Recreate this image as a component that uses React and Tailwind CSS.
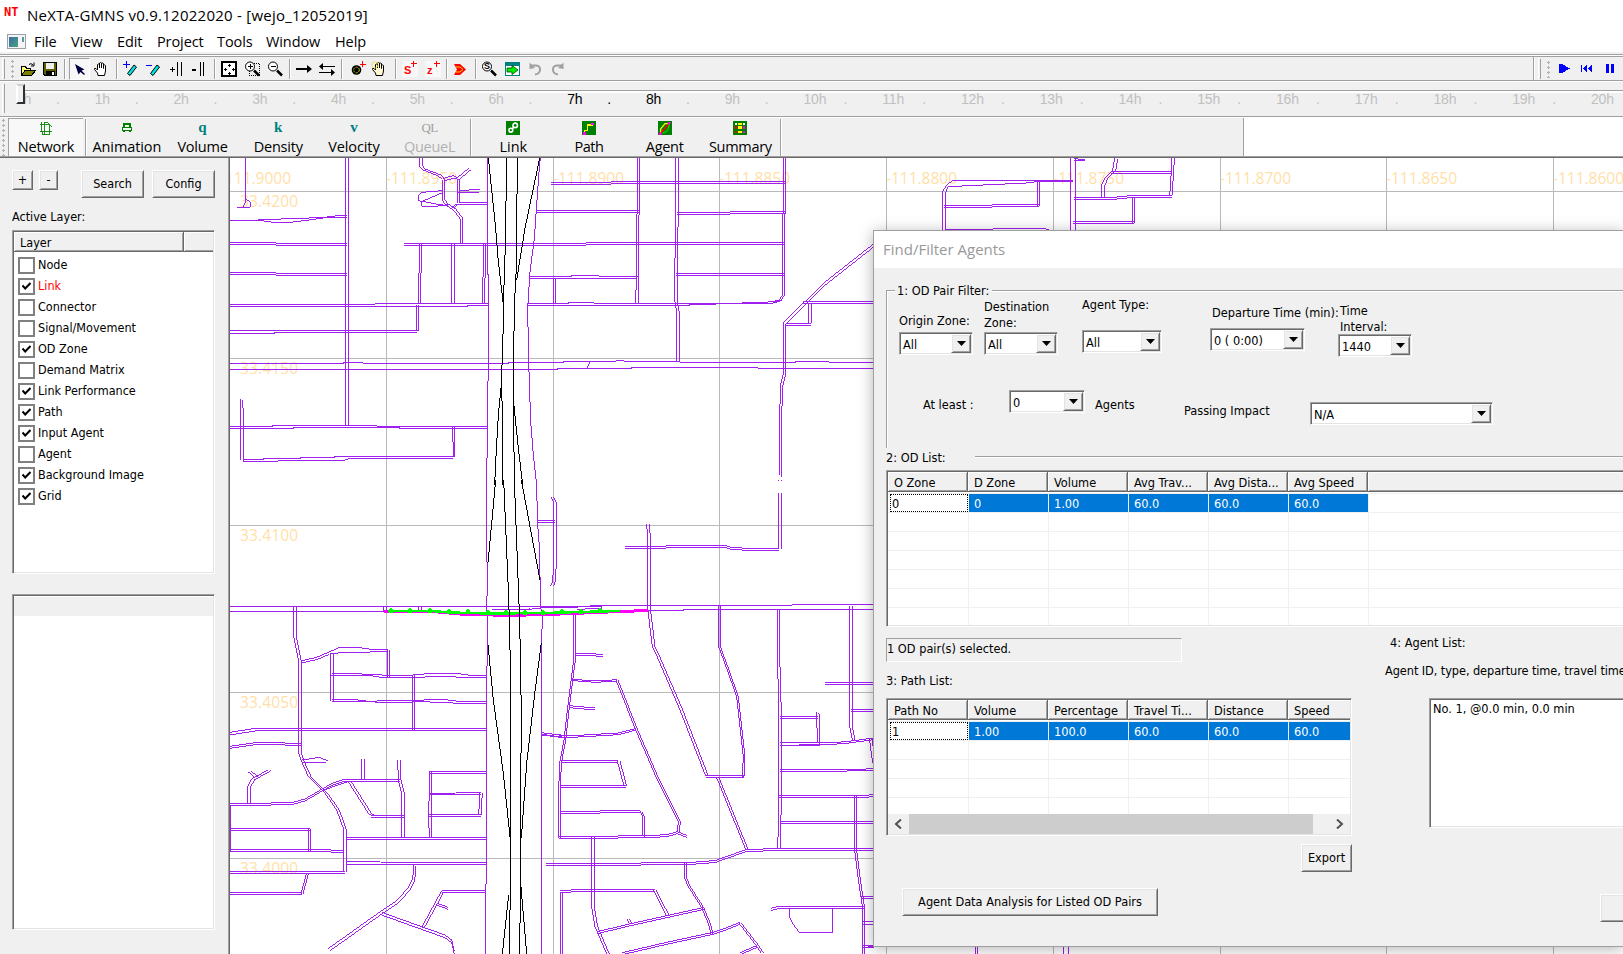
import React from 'react';

const TAHOMA = "font-['DejaVu_Sans_Condensed','DejaVu_Sans',sans-serif] [font-stretch:condensed]";
const SEGOE = "font-['Open_Sans',sans-serif] [font-stretch:normal]";
const RAISED =
  'bg-[#f0f0f0] border border-t-white border-l-white border-r-[#696969] border-b-[#696969] shadow-[inset_1px_1px_0_#e3e3e3,inset_-1px_-1px_0_#a0a0a0]';
const SUNKEN =
  'bg-white border border-t-[#a0a0a0] border-l-[#a0a0a0] border-r-white border-b-white p-px shadow-[inset_1px_1px_0_#696969,inset_-1px_-1px_0_#e3e3e3]';

/* ---------- road network: [offset of the twin carriageway, points] ---------- */
const NW = [
  ['0 0', '61,9 61,140 55,157'], ['0 0', '61,132 76,140 76,157 37,157'],
  ['9 0', '362,9 362,810'],
  ['0 0', '15,196 105,196 145,202 195,202 260,194 300,188 365,187'],
  ['0 0', '98,194 207,191 300,187 345,181 365,182'],
  ['0 6', '15,263 153,263 153,265 365,265'],
  ['0 6', '15,352 153,352 153,355 365,355'],
  ['0 0', '15,448 450,448 450,446 790,446'], ['0 0', '15,454 728,454 728,451 790,451'],
  ['0 0', '15,526 580,526'], ['0 0', '15,535 150,535 150,532 576,532'],
  ['7 0', '575,450 574,528'],
  ['0 0', '15,625 357,625 357,622 413,622 413,625 852,625 852,622 1015,622'],
  ['0 0', '15,643 1000,643 1000,640 1020,640'],
  ['0 0', '47,732 47,915'], ['0 0', '53,735 55,780 55,918'],
  ['0 0', '15,814 144,814 144,811 456,811 456,814 788,814'],
  ['0 0', '15,820 207,820 207,817 525,817 525,821 788,821'],
  ['0 0', '53,919 158,919 160,916 368,915 368,912 578,912 580,910 685,910'],
  ['0 0', '55,913 117,913 117,910 228,910 228,907 330,907 330,904 685,904'],
  ['5 0', '683,817 685,905'],
  ['0 0', '788,9 788,360 791,360 791,675 788,680 788,905 785,910 785,990'],
  ['0 0', '945,9 937,120 928,250 915,350 908,460 911,620 917,800 925,900 935,990'],
  ['7 -3', '585,9 585,35 594,45 640,63 652,74 652,135 660,148 685,165 706,192 706,266'],
  ['4 7', '655,70 685,62 697,68 733,38'], ['6 0', '697,72 697,145 680,160'],
  ['0 0', '652,107 590,112 580,122 580,137 645,149 668,152'],
  ['0 0', '652,113 590,140 590,154 632,154 668,149'],
  ['0 0', '705,107 733,106 735,103 764,103'], ['0 0', '700,112 762,112'],
  ['0 6', '702,142 788,142'], ['0 6', '538,265 1020,265'],
  ['6 0', '584,268 584,340 581,360 581,445'], ['8 0', '680,268 680,446'],
  ['7 0', '776,268 776,355 773,370 773,445'],
  ['0 6', '978,83 1020,83'], ['0 6', '935,166 1020,166'], ['0 6', '915,364 1020,364'],
  ['6 0', '986,370 986,448'], ['0 6', '908,446 1020,446'],
];
const N = [
  ['0 0', '0,9 0,18'], ['7 0', '293,9 293,170 290,180 290,330 287,446'],
  ['7 0', '408,9 408,170 405,310 405,440 411,475 411,620'],
  ['6 0', '732,9 732,120 728,195 728,420 716,437 700,443'],
  ['0 6', '34,83 165,83 240,80 735,80'], ['0 6', '0,167 297,167'],
  ['0 6', '410,173 570,173 570,170 735,170'],
  ['0 6', '0,265 135,265 147,262 735,262'], ['0 6', '408,355 732,355'],
  ['0 0', '0,364 96,364 96,361 177,361 177,364 293,364'], ['0 0', '0,370 290,370'],
  ['6 0', '41,370 41,448'],
  ['0 0', '0,445 87,445 87,442 162,442 162,445 605,445 607,442 684,442 685,439 727,437'],
  ['0 0', '0,451 450,451 450,448 527,448 527,445 700,445'],
  ['0 0', '0,622 72,622 72,619 228,619 228,617 252,617 252,619 420,619 420,622 768,622 768,619 867,619 867,622 1001,622'],
  ['0 0', '0,643 54,643 54,640 276,640 276,637 654,637 654,640 1001,640'],
  ['0 0', '149,620 142,640'],
  ['6 5', '1000,267 850,385 732,502 732,650 723,685 719,770 719,960'],
  ['0 6', '790,439 1001,439'], ['8 0', '806,445 806,505'], ['0 5', '737,506 812,506'],
];
const SW = [
  ['0 0', '15,380 945,380'], ['0 0', '15,394 480,394'],
  ['9 0', '476,380 476,392'], ['8 0', '581,380 581,392'],
  ['0 0', '785,0 785,245 788,250 785,400 788,410 788,500 785,590 785,1210 782,1215 782,1422'],
  ['0 0', '935,0 937,120 943,200 947,380 952,410 949,520 949,1422'],
  ['0 0', '800,388 900,390 945,384 1020,384'], ['0 0', '800,390 915,387'],
  ['8 0', '207,380 207,475 221,545 221,820 232,850 250,890 300,940 335,990 355,1045 357,1175'],
  ['3 6', '228,543 275,532 310,517'],
  ['0 0', '310,517 345,502 400,502 430,507 490,509'], ['0 0', '315,520 385,517 490,515'],
  ['8 0', '317,520 317,662'], ['6 0', '488,509 488,590'],
  ['0 0', '318,586 430,586 470,592 590,592 625,589 675,589 700,592 783,592'],
  ['0 0', '322,580 400,581 435,584 460,583 490,588 550,586 590,583 605,581 700,581 735,586 783,587'],
  ['7 0', '563,586 563,750'],
  ['0 0', '322,658 390,659 430,664 510,661 590,661 605,659 660,659 700,664 783,664'],
  ['0 0', '322,664 440,664 445,666 540,667 590,665 640,667 680,669 783,670'],
  ['0 8', '15,757 90,745 783,745'],
  ['0 6', '15,799 90,788 170,788 200,791 228,791'],
  ['0 0', '231,840 285,832 308,843'], ['0 0', '231,847 302,847'],
  ['0 6', '15,970 138,970 140,967 205,967 240,957 290,928 325,908 355,899 525,899'],
  ['0 0', '290,932 370,905'],
  ['8 3', '68,970 68,920 80,897 130,869'], ['8 -3', '70,876 90,893'],
  ['7 0', '411,837 411,899'], ['8 0', '518,840 520,900 530,940 530,1075'],
  ['9 0', '368,902 430,1000 440,1007'], ['0 6', '437,1007 537,1007'],
  ['0 6', '613,875 783,875'], ['7 0', '614,877 611,1010 613,1075'],
  ['0 5', '614,940 690,940 692,938 768,938'], ['7 0', '765,938 761,1005'], ['0 6', '613,1003 768,1003'],
  ['0 6', '362,1073 783,1073'],
  ['0 6', '15,1046 254,1046'], ['6 0', '250,1046 250,1112'],
  ['0 6', '15,1108 305,1108 325,1111 358,1111'], ['0 0', '17,975 17,1112'],
  ['0 6', '15,1174 360,1174'], ['0 6', '15,1238 232,1238'], ['6 0', '245,1178 228,1242'],
  ['0 0', '362,1145 465,1145 467,1147 783,1147'], ['0 0', '362,1153 783,1153'],
  ['6 6', '567,1152 563,1195 548,1225 515,1262 470,1292 308,1407'],
  ['0 8', '470,1297 595,1342 660,1365 680,1380 688,1414'],
  ['7 3', '590,1342 650,1232'], ['0 6', '650,1232 783,1232'], ['0 6', '637,1270 670,1282'],
  ['0 7', '949,758 1015,766'], ['8 0', '978,52 986,67 986,250 983,305 977,318'],
  ['0 6', '937,121 990,121'],
  ['0 6', '963,1150 1020,1150'], ['7 0', '1007,1235 1007,1422'], ['0 6', '1006,1232 1020,1232'],
];
const S = [
  ['8 0', '320,132 323,172 323,385 337,500 347,520 420,690 497,888'],
  ['0 6', '254,199 378,199 380,196 553,196 575,202 620,205 718,205'],
  ['8 0', '716,40 716,208'], ['8 0', '716,0 716,4'],
  ['0 0', '0,380 150,380 150,377 756,377 756,374 1001,374'],
  ['0 0', '324,391 432,391 432,388 1001,388'],
  ['0 0', '0,384 95,384 115,381 185,379 185,385 110,388'],
  ['5 0', '101,400 101,540 92,610 82,690 72,780 59,850 56,930 56,1073'],
  ['0 6', '105,520 145,520 190,524'], ['0 4', '100,598 165,603 218,600 230,599'],
  ['6 0', '228,600 285,745 350,895 415,1025 412,1055'],
  ['0 6', '87,677 165,684'],
  ['0 5', '5,758 80,768 150,764 235,759 285,746'],
  ['0 6', '64,841 235,841'], ['8 0', '232,843 252,918'], ['0 6', '60,916 258,916'],
  ['0 6', '62,995 180,995 180,992 300,992'], ['7 4', '299,992 308,1010 308,1068'],
  ['0 6', '58,1070 232,1070 234,1067 320,1067 380,1064 412,1055 440,1066'],
  ['8 0', '155,1072 155,1280 165,1340 200,1422'],
  ['0 6', '18,1150 297,1150 315,1147 448,1147 490,1145 530,1140 620,1108 670,1107 1001,1106'],
  ['5 0', '536,377 536,500 560,565 590,650 600,740 610,830 607,890'],
  ['0 6', '497,888 613,888'], ['7 0', '530,893 617,1108'],
  ['7 0', '713,390 713,560 717,700 717,970 713,1108'],
  ['8 0', '929,379 929,605 929,740 937,780'], ['0 6', '856,607 1001,607'], ['0 6', '933,688 1001,688'],
  ['0 6', '720,710 833,710'], ['7 3', '830,697 832,788'],
  ['0 8', '720,788 840,788'], ['0 5', '777,789 860,789 920,785 1001,774'],
  ['8 0', '988,775 998,850'],
  ['0 5', '720,869 862,869 980,867 1001,866'], ['0 6', '718,946 980,946 1001,943'], ['0 6', '720,1024 1001,1024'],
  ['6 0', '944,948 944,1110 955,1200 968,1285 968,1422'],
  ['0 6', '962,1250 1001,1250'], ['0 7', '970,1326 1001,1326'], ['0 6', '970,1397 1001,1397'],
  ['0 7', '694,1285 710,1280 972,1280'], ['0 0', '740,1281 885,1281'],
  ['0 0', '748,1285 748,1310 760,1333 778,1357 878,1357 878,1285'],
  ['6 0', '62,1235 62,1422'], ['0 6', '62,1232 110,1229 345,1229'], ['8 0', '340,1230 380,1308'],
  ['6 0', '434,1150 434,1195 445,1220 485,1283 505,1330 513,1362'],
  ['0 6', '172,1355 272,1331 385,1306 492,1282'], ['8 0', '260,1316 268,1332'],
  ['0 6', '247,1418 380,1387 515,1358 560,1343 600,1327'], ['7 0', '597,1330 650,1398 664,1420'],
  ['0 6', '600,1418 650,1397'],
];
const NE = [
  ['0 0', '228,228 228,110 235,95 340,90 470,84 500,80 610,80'],
  ['0 0', '218,228 218,110 230,90 247,77 610,77'],
  ['7 0', '503,80 503,153'], ['0 6', '223,152 365,152 366,149 508,149'],
  ['0 0', '228,223 368,223 370,221 525,221 545,227'],
  ['16 0', '602,9 602,130 602,228'], ['0 4', '612,11 645,14'],
  ['9 2', '734,9 728,45 705,68 695,90 695,128'],
  ['0 6', '722,49 905,49'], ['7 0', '906,9 904,50 899,122'],
  ['0 6', '612,128 722,128 780,122 905,122'], ['6 0', '788,125 788,203'], ['0 6', '610,199 793,199'],
  ['0 6', '0,439 12,439'], ['0 18', '0,622 12,622'],
];
const BLACK_N = [
  '790,9 812,220 820,320 835,450', '845,9 841,270 835,450 834,540 829,690 832,760 834,990',
  '829,690 820,780 812,920 809,990', '877,9 874,340 868,450 865,690 868,990',
  '944,9 900,220 875,375', '865,735 880,880 893,990',
];
const BLACK_S = [
  '812,0 800,130 789,248', '836,0 850,330 853,420 858,640 857,1160 853,1422',
  '868,0 880,320 884,420 889,700 886,1060 887,1240 883,1422', '889,0 930,220 945,300',
  '789,495 805,660 835,880 855,1070', '949,488 928,650 905,850 889,1075',
  '851,1245 832,1422', '888,1220 905,1422',
];

function Roads({ data, at }) {
  return (
    <g transform={`translate(${at}) scale(0.333333)`} stroke="#a020f0" strokeWidth="3" fill="none">
      {data.map(([off, pts], i) => (
        <g key={i}>
          <polyline points={pts} />
          {off !== '0 0' && <polyline points={pts} transform={`translate(${off})`} />}
        </g>
      ))}
    </g>
  );
}

function NetworkMap() {
  const xs = [386, 553, 719, 886, 1053, 1220, 1386, 1553];
  const ys = [191, 358, 525, 692, 858];
  const lon = ['-111.9000', '-111.8950', '-111.8900', '-111.8850', '-111.8800', '-111.8750', '-111.8700', '-111.8650', '-111.8600'];
  const lonX = [220, 386, 553, 719, 886, 1053, 1220, 1386, 1553];
  const lat = [['33.4200', 207], ['33.4150', 374], ['33.4100', 541], ['33.4050', 708], ['33.4000', 874]];
  const nodes = [[391, 610], [410, 610], [430, 610], [449, 611], [468, 611], [488, 612], [506, 612], [525, 612], [543, 612], [562, 611], [581, 611], [600, 610]];
  return (
    <svg className="block h-[796px] w-[1393px] bg-white" viewBox="230 158 1393 796" shapeRendering="crispEdges">
      <g stroke="#b9b9b9" strokeWidth="1">
        {xs.map((x) => <line key={x} x1={x + 0.5} x2={x + 0.5} y1="158" y2="954" />)}
        {ys.map((y) => <line key={y} y1={y + 0.5} y2={y + 0.5} x1="230" x2="1623" />)}
      </g>
      <g className={`${SEGOE} text-[15.5px]`} fill="#ffdfa8">
        {lon.map((t, i) => <text key={t} x={lonX[i]} y="184" textLength="71">{t}</text>)}
        {lat.map(([t, y]) => <text key={t} x="240" y={y} textLength="58">{t}</text>)}
      </g>
      <Roads data={NW} at="225 155" />
      <Roads data={N} at="540 155" />
      <Roads data={SW} at="225 480" />
      <Roads data={S} at="540 480" />
      <Roads data={NE} at="870 155" />
      <g stroke="#a020f0" fill="none">
        <path d="M975.500 946V954M977.500 946V954M1063.500 946V954M1068.500 946V954M868 946.500H906" />
      </g>
      <polyline points="384,611.500 433,611.500 460,614 510,615.500 560,614 620,611.500 648,610.500" stroke="#ff00ff" strokeWidth="3" fill="none" />
      <polyline points="388,611 432,611 450,612.500 490,613.500 545,613 580,612 620,611" stroke="#00ff00" strokeWidth="2.500" fill="none" />
      {nodes.map(([x, y]) => <path key={x} d={`M${x - 2} ${y - 1}H${x - 1}V${y - 2}H${x + 1}V${y - 1}H${x + 2}V${y + 3}H${x - 2}Z`} fill="#00ff00" />)}
      <g stroke="#000" strokeWidth="3" fill="none">
        <g transform="translate(225 155) scale(0.333333)">{BLACK_N.map((p) => <polyline key={p} points={p} />)}</g>
        <g transform="translate(225 480) scale(0.333333)">{BLACK_S.map((p) => <polyline key={p} points={p} />)}</g>
      </g>
    </svg>
  );
}

/* ---------- toolbar icons ---------- */
const I = ({ children, c = '' }) => (
  <svg className={`h-4 w-4 shrink-0 ${c}`} viewBox="0 0 16 16" fill="none" stroke="#000" shapeRendering="crispEdges">{children}</svg>
);
const Mag = () => (
  <>
    <circle cx="6" cy="5.500" r="4.500" fill="#fff" shapeRendering="auto" />
    <path d="M10 9.500L15 14.500" strokeWidth="2.500" shapeRendering="auto" />
  </>
);
const HandShape = ({ fill = '#fff' }) => (
  <path d="M5 14.500L4.500 12L1.500 8.500V7.500H3L4.500 9V3.500Q5.500 2.500 6.500 3.500V7V2Q7.500 1 8.500 2V7V2.500Q9.500 1.500 10.500 2.500V7.500V4Q11.500 3.500 12.500 4.500V10L11.500 14.500Z" fill={fill} shapeRendering="auto" />
);
const Sep = ({ c }) => <div className={`h-[20px] w-0.5 border-l border-l-[#a0a0a0] bg-white ${c}`} />;
const Red = ({ t, c }) => (
  <div className={`relative h-4 w-4 shrink-0 bg-[#f8f8f8] ${c}`}>
    <span className="absolute left-[2px] top-[3px] font-['Liberation_Sans',sans-serif] text-[11px] leading-[13px] font-bold text-[#f00]">{t}</span>
    <svg className="absolute left-[8px] top-0 h-[7px] w-[7px]" viewBox="0 0 7 7" stroke="#f00" shapeRendering="crispEdges"><path d="M3.500 0V6M0.500 2.500H6.500" /></svg>
  </div>
);

function Grip({ c = '' }) {
  return <div className={`w-[3px] border-l border-r border-l-white border-r-[#a0a0a0] ${c}`} />;
}
function Dots({ c = '' }) {
  return <div className={`w-[3px] bg-[radial-gradient(circle,#b0b0b0_1.2px,transparent_1.4px)] bg-[length:3px_5px] ${c}`} />;
}

function MainToolbar() {
  return (
    <div className="flex h-[23px] items-center bg-[#f0f0f0]">
      <Grip c="ml-[2px] h-[20px]" />
      <Dots c="ml-[6px] h-[20px]" />
      <I c="ml-[6px]">
        <path d="M1.500 14V5.500H5L6.500 7H10.500V9" fill="#ffff80" />
        <path d="M1.500 14.500L5 9.500H15.500L11.500 14.500Z" fill="#808000" />
        <path d="M9 3.500Q11 1.500 13 4M14 1.500V5H11" shapeRendering="auto" />
      </I>
      <I c="ml-[6px]">
        <path d="M1.500 1.500H14.500V14.500H3L1.500 13Z" fill="#606000" /><rect x="4" y="2" width="8" height="6" fill="#f0f0f0" stroke="none" /><rect x="4" y="10" width="9" height="5" fill="#000" stroke="none" /><rect x="10" y="11" width="2" height="3" fill="#fff" stroke="none" />
      </I>
      <Sep c="ml-[6px]" />
      <div className="ml-[3px] flex h-[22px] w-[21px] items-center justify-center border border-b-white border-l-[#a0a0a0] border-r-white border-t-[#a0a0a0] bg-[#f8f8f8]">
        <I><path d="M3 3L12.500 8.500L9.500 9.500L13 13L12 14L8.500 11L6.500 13.500Z" fill="#000040" stroke="none" shapeRendering="auto" /></I>
      </div>
      <I c="ml-[3px]"><HandShape /></I>
      <Sep c="ml-[7px]" />
      <I c="ml-[4px]"><path d="M1 3.500H8M4.500 0V7" stroke="#00f" /><path d="M12 4L14.500 6L8 14.500L5.500 12.500Z" fill="#00e5e5" shapeRendering="auto" /></I>
      <I c="ml-[7px]"><path d="M1 4.500H7" stroke="#00f" /><path d="M12 4L14.500 6L8 14.500L5.500 12.500Z" fill="#00e5e5" shapeRendering="auto" /></I>
      <I c="ml-[7px]"><path d="M2 8.500H7M4.500 6V11" strokeWidth="1.400" /><path d="M9.500 1V15M13.500 1V15" /></I>
      <I c="ml-[6px]"><path d="M2 9H6" strokeWidth="1.500" /><path d="M10.500 1V15M13.500 1V15" /></I>
      <Sep c="ml-[8px]" />
      <I c="ml-[5px]"><rect x="1" y="1" width="14" height="14" strokeWidth="2" fill="#fff" /><path d="M7 4.500H10M8.500 3V6M7 12.500H10M8.500 11V14M3 8.500H6M4.500 7V10M11 8.500H14M12.500 7V10" /></I>
      <I c="ml-[7px]"><rect x="5.500" y="2.500" width="10" height="12" strokeDasharray="1 1" /><Mag /><path d="M3.500 5.500H8.500M6 3V8" /></I>
      <I c="ml-[7px]"><Mag /><path d="M3.500 5.500H8.500" /></I>
      <Sep c="ml-[6px]" />
      <I c="ml-[5px]"><path d="M0 8H15" strokeWidth="2" /><path d="M11 4L16 8L11 12Z" fill="#000" stroke="none" shapeRendering="auto" /></I>
      <I c="ml-[7px]"><path d="M1 5.500H16M0 11.500H15" /><path d="M4 2L0 5.500L4 9ZM12 8L16 11.500L12 15Z" fill="#000" stroke="none" shapeRendering="auto" /></I>
      <Sep c="ml-[6px]" />
      <I c="ml-[7px]"><circle cx="6.500" cy="9" r="4.800" fill="#000" stroke="none" shapeRendering="auto" /><circle cx="6.500" cy="9" r="2.800" stroke="#c8c800" strokeDasharray="2 1" shapeRendering="auto" /><path d="M12.500 0V6M10 3.500H16" stroke="#f00" /></I>
      <I c="ml-[5px]"><HandShape fill="#fff8d0" /><circle cx="4" cy="4" r="3" stroke="#f0e000" strokeDasharray="2 1" shapeRendering="auto" /></I>
      <Sep c="ml-[8px]" />
      <Red t="S" c="ml-[5px]" />
      <Red t="z" c="ml-[7px]" />
      <Sep c="ml-[5px]" />
      <I c="ml-[4px]"><path d="M2 3H8L14 8.500L8 14H2L5 8.500Z" fill="#f00" stroke="none" shapeRendering="auto" /><path d="M4 6H8L11 8.500L8 11H4" stroke="#ffd000" shapeRendering="auto" /></I>
      <Sep c="ml-[7px]" />
      <div className="relative ml-[4px] h-4 w-4">
        <I c="absolute left-0 top-0"><Mag /></I>
        <span className="absolute left-[3px] top-0 font-['Liberation_Sans',sans-serif] text-[9px] leading-[11px] font-bold">S</span>
      </div>
      <I c="ml-[8px]"><rect x="0.500" y="1.500" width="14" height="13" fill="#fff" stroke="#008080" /><path d="M0 3H15" strokeWidth="3" stroke="#008080" /><path d="M2 7H7V4.500L13 9L7 13.500V11H2Z" fill="#0e0" stroke="#004000" strokeWidth="0.800" shapeRendering="auto" /></I>
      <I c="ml-[6px]"><path d="M4 4.500H9Q13.500 5 13 9T8 13.500" strokeWidth="2" stroke="#a0a0a0" shapeRendering="auto" /><path d="M2.500 1.500V8L8 7Z" fill="#a0a0a0" stroke="none" shapeRendering="auto" /></I>
      <I c="ml-[7px]"><path d="M12 4.500H7Q2.500 5 3 9T8 13.500" strokeWidth="2" stroke="#a0a0a0" shapeRendering="auto" /><path d="M13.500 1.500V8L8 7Z" fill="#a0a0a0" stroke="none" shapeRendering="auto" /></I>
      <div className="ml-auto h-[23px] w-[2px] border-l border-l-[#a0a0a0] bg-white" />
      <Grip c="ml-[3px] h-[20px]" />
      <Dots c="ml-[6px] h-[18px]" />
      <svg className="ml-[8px] h-4 w-[65px]" viewBox="0 0 65 16" fill="#00f" shapeRendering="crispEdges">
        <path d="M1 3H4L12 7.500L4 12H1Z" /><path d="M23 4H24V11H23ZM29 4V11L25 7.500ZM34 4V11L30 7.500Z" /><path d="M48 3H51V12H48ZM53 3H56V12H53Z" />
      </svg>
    </div>
  );
}

function TimeSlider() {
  const hours = Array.from({ length: 21 }, (_, i) => i);
  return (
    <div className="relative flex h-[35px] border-t border-t-white bg-[#f0f0f0]">
      <Grip c="absolute left-[2px] top-[2px] h-[29px]" />
      <div className="mt-[8px] ml-[18px] h-[3px] w-full border-t border-t-[#a0a0a0] bg-white" />
      <div className="absolute left-[16px] top-[9px] flex w-[1607px] overflow-hidden font-['Liberation_Sans_Narrow','Liberation_Sans',sans-serif] text-[14px] leading-[16px] tracking-[-0.2px]">
        {hours.map((h) => (
          <div key={h} className={h === 7 || h === 8 ? 'flex w-[78.75px] shrink-0 text-black' : 'flex w-[78.75px] shrink-0 text-[#c0c0c0] last:w-[30px]'}>
            <span className="w-[40px]">{h}h</span>
            {h < 20 && <span className={h === 8 ? 'text-[#c0c0c0]' : ''}>.</span>}
          </div>
        ))}
      </div>
      <div className="absolute left-[16px] top-[2px] h-[20px] w-[9px] border-2 border-b-[#303030] border-l-white border-r-[#303030] border-t-[#d0d0d0] bg-[#f0f0f0]" />
    </div>
  );
}

const G = '#008000';
function ViewIcon({ name }) {
  if ('qkv'.includes(name) || name === 'QL')
    return (
      <span className={name === 'QL' ? "h-4 font-['Liberation_Serif',serif] text-[13px] leading-[14px] text-[#a0a0a0] tracking-[-0.5px]" : "h-4 font-['Liberation_Serif',serif] text-[15px] leading-[13px] font-bold text-[#008080]"}>{name}</span>
    );
  return (
    <svg className="h-4 w-4" viewBox="0 0 16 16" fill="none" stroke={G} shapeRendering="crispEdges">
      {name === 'net' && <path d="M1 4.500H11M1 11.500H15M2.500 1V12M6.500 1V16M6.500 1.500H9.500L14.500 6.500M11.500 4V15.500H3.500V12" />}
      {name === 'car' && <path d="M4.500 7V3.500H11.500V7M3 7.500H13V10.500H3ZM4.500 11V13M11.500 11V13" strokeWidth="1.400" />}
      {name !== 'net' && name !== 'car' && <rect x="0" y="0" width="16" height="16" fill={G} stroke="none" />}
      {name === 'link' && <g stroke="#fff" strokeWidth="1.800" shapeRendering="auto"><circle cx="10.500" cy="5" r="2.600" /><circle cx="5.500" cy="10.500" r="2.200" /><path d="M7 9L9 7" /></g>}
      {name === 'path' && <><path d="M3 14V10.500H6.500V4.500H12" stroke="#ff0" strokeWidth="1.500" /><path d="M10 2H14V4H10ZM1 13H4V16H1Z" fill="#f0f" stroke="none" /></>}
      {name === 'agent' && <g shapeRendering="auto"><path d="M3 14V9L8 3H12" stroke="#ff0" strokeWidth="1.500" /><path d="M3 14L12 4" stroke="#f00" strokeWidth="1.800" /><path d="M5 14L11 11L13 4" stroke="#0f0" /><path d="M11 1H14V4H11ZM1 13H4V16H1Z" fill="#f0f" stroke="none" /></g>}
      {name === 'sum' && <g stroke="none"><path d="M2 2H5V5H2ZM11 2H14V5H11Z" fill="#fff" /><path d="M6 2H10V5H6ZM6 6H10V9H6ZM6 11H10V14H6Z" fill="#ff0" /><path d="M2 6H5V9H2ZM2 11H5V14H2Z" fill="#f00" /><path d="M11 6H14V9H11ZM11 11H14V14H11Z" fill="#f0f" /></g>}
    </svg>
  );
}
const ViewButton = ({ icon, label, c = 'w-[75.7px] pt-[3px]', t = '' }) => (
  <div className={`flex h-[38px] shrink-0 flex-col items-center whitespace-nowrap ${c}`}>
    <ViewIcon name={icon} />
    <span className={`mt-[3px] text-[14.5px] leading-[18px] ${t}`}>{label}</span>
  </div>
);

function ViewToolbar() {
  return (
    <div className={`flex h-[39px] border-t border-t-white bg-white ${SEGOE}`}>
      <div className="flex w-[1244px] border-r border-r-[#a0a0a0] bg-[#f0f0f0]">
        <Dots c="ml-[2px] h-[38px]" />
        <ViewButton icon="net" label="Network" c="ml-[3px] w-[75px] pt-[2px] border-l border-t border-[#a0a0a0] bg-[#f8f8f8]" t="tracking-[-0.2px]" />
        <Sep c="mt-px ml-[2px] h-[37px]" />
        <ViewButton icon="car" label="Animation" c="ml-[2px] w-[75.700px] pt-[3px]" t="tracking-[-0.1px]" />
        <ViewButton icon="q" label="Volume" t="tracking-[-0.2px]" />
        <ViewButton icon="k" label="Density" t="tracking-[-0.2px]" />
        <ViewButton icon="v" label="Velocity" t="tracking-[-0.1px]" />
        <ViewButton icon="QL" label="QueueL" t="text-[#b0b0b0] tracking-[-0.3px]" />
        <Sep c="mt-px h-[37px] ml-[3px]" />
        <ViewButton icon="link" label="Link" c="ml-[3px] w-[75.700px] pt-[3px]" />
        <ViewButton icon="path" label="Path" t="tracking-[-0.5px]" />
        <ViewButton icon="agent" label="Agent" t="tracking-[-0.3px]" />
        <ViewButton icon="sum" label="Summary" t="tracking-[-0.3px]" />
        <Sep c="mt-px h-[37px] ml-[2px]" />
      </div>
    </div>
  );
}

/* ---------- side panel ---------- */
const LAYERS = [
  ['Node', 0], ['Link', 1], ['Connector', 0], ['Signal/Movement', 0], ['OD Zone', 1], ['Demand Matrix', 0],
  ['Link Performance', 1], ['Path', 1], ['Input Agent', 1], ['Agent', 0], ['Background Image', 1], ['Grid', 1],
];
const Btn = ({ children, c }) => <button className={`flex shrink-0 items-center justify-center whitespace-nowrap ${RAISED} ${c}`}>{children}</button>;

function SidePanel() {
  return (
    <aside className="flex w-[230px] shrink-0 flex-col border-r border-r-[#696969] bg-[#f0f0f0] pl-3 shadow-[inset_-1px_0_0_#a0a0a0]">
      <div className="mt-3 flex items-start">
        <Btn c="h-[20px] w-[21px]">+</Btn>
        <Btn c="ml-[6px] h-[20px] w-[19px]">-</Btn>
        <Btn c="ml-[23px] h-[28px] w-[63px]">Search</Btn>
        <Btn c="ml-[8px] h-[28px] w-[63px]">Config</Btn>
      </div>
      <div className="mt-[11px] leading-4">Active Layer:</div>
      <div className={`mt-[5px] h-[344px] w-[203px] ${SUNKEN}`}>
        <div className="flex h-[20px] border-b border-b-[#696969] bg-[#f0f0f0] leading-[21px]">
          <div className="w-[170px] border-r border-r-[#696969] pl-[6px] shadow-[inset_1px_1px_0_#fff,inset_-1px_-1px_0_#a0a0a0]">Layer</div>
          <div className="flex-1 shadow-[inset_1px_1px_0_#fff,inset_0_-1px_0_#a0a0a0]" />
        </div>
        <div className="pt-[3px] pl-1">
          {LAYERS.map(([name, on]) => (
            <div key={name} className="flex h-[21px] items-center">
              <div className="flex h-[17px] w-[17px] items-center justify-center border-2 border-[#808080] bg-white">
                {on ? <svg className="h-[9px] w-[9px]" viewBox="0 0 9 9" fill="none" stroke="#000" strokeWidth="2"><path d="M0.500 3.500L3.200 6.500L8.500 1" /></svg> : null}
              </div>
              <span className={name === 'Link' ? 'ml-[3px] text-[#f00]' : 'ml-[3px]'}>{name}</span>
            </div>
          ))}
        </div>
      </div>
      <div className={`mt-[20px] h-[336px] w-[203px] ${SUNKEN}`}>
        <div className="h-[20px] border-t border-t-white bg-[#f0f0f0]" />
      </div>
    </aside>
  );
}

/* ---------- dialog ---------- */
const Combo = ({ value, c }) => (
  <div className={`flex h-[23px] shrink-0 ${SUNKEN} ${c}`}>
    <span className="flex-1 pl-[2px] leading-[22px] whitespace-nowrap">{value}</span>
    <div className={`flex h-full w-[20px] items-center justify-center ${RAISED}`}>
      <svg className="h-[5px] w-[9px]" viewBox="0 0 9 5"><path d="M0 0H9L4.500 5Z" /></svg>
    </div>
  </div>
);

function Table({ cols, row, c, blanks, fill, children }) {
  const names = fill ? [...cols, ''] : cols;
  return (
    <div className={`overflow-hidden ${SUNKEN} ${c}`}>
      <div className="flex h-full flex-col overflow-hidden">
        <div className="flex h-[20px] shrink-0 bg-[#f0f0f0] shadow-[inset_0_-1px_0_#696969]">
          {names.map((n, i) => (
            <div key={i} className={n ? 'mb-px w-[80px] shrink-0 border-r border-r-[#696969] pl-[6px] leading-[21px] whitespace-nowrap shadow-[inset_1px_1px_0_#fff,inset_-1px_-1px_0_#a0a0a0]' : 'mb-px flex-1 shadow-[inset_1px_1px_0_#fff,inset_0_-1px_0_#a0a0a0]'}>{n}</div>
          ))}
        </div>
        <div className="mt-px h-px shrink-0 bg-[#f0f0f0]" />
        <div className="flex h-[19px] shrink-0 border-b border-b-[#f0f0f0] leading-[19px]">
          {row.map((v, i) => (
            <div key={i} className={i ? 'w-[80px] shrink-0 border-r border-r-[#f0f0f0] bg-[#0078d7] pl-[5px] text-white' : 'w-[81px] shrink-0 pr-px pl-[2px]'}>
              {i ? v : <div className="h-[18px] border border-dotted border-black pl-px leading-[17px]">{v}</div>}
            </div>
          ))}
        </div>
        {Array.from({ length: blanks }, (_, r) => (
          <div key={r} className={r === blanks - 1 ? 'flex min-h-0 flex-1' : 'flex h-[19px] shrink-0 border-b border-b-[#f0f0f0]'}>
            {row.map((_, i) => <div key={i} className={i ? 'w-[80px] shrink-0 border-r border-r-[#f0f0f0]' : 'w-[81px] shrink-0 border-r border-r-[#f0f0f0]'} />)}
          </div>
        ))}
        {children}
      </div>
    </div>
  );
}

function Dialog() {
  return (
    <div className="absolute left-[873px] top-[230px] flex h-[717px] w-[750px] flex-col overflow-visible border border-r-0 border-[#a0a0a0] bg-[#f0f0f0] text-[12.65px] shadow-[0_2px_14px_rgba(0,0,0,0.3)]">
      <div className={`h-[37px] shrink-0 bg-white pl-[9px] text-[15px] leading-[37px] text-[#999] ${SEGOE}`}>Find/Filter Agents</div>
      <div className="flex flex-1 flex-col overflow-hidden pl-3 leading-4 whitespace-nowrap">
        <fieldset className="mt-[14px] h-[166px] shrink-0 border-t border-l border-[#a0a0a0] shadow-[inset_1px_1px_0_#fff]">
          <legend className="ml-[8px] h-4 bg-[#f0f0f0] pr-[3px] pl-[2px] leading-[17px]">1: OD Pair Filter:</legend>
          <div className="flex h-[62px] items-start">
            <div className="mt-[15px] ml-3 w-[74px]"><div className="h-4">Origin Zone:</div><Combo value="All" c="mt-[3px]" /></div>
            <div className="mt-px ml-[11px] w-[74px]"><div className="h-4">Destination</div><div className="h-4">Zone:</div><Combo value="All" c="mt-px" /></div>
            <div className="mt-[-1px] ml-6 w-[80px]"><div className="h-4">Agent Type:</div><Combo value="All" c="mt-[17px]" /></div>
            <div className="mt-[7px] ml-12 w-[128px]"><div className="h-4 pl-[2px]">Departure Time (min):</div><Combo value="0 ( 0:00)" c="mt-[7px] w-[95px]" /></div>
            <div className="mt-[5px] w-[74px]"><div className="h-4 pl-[2px]">Time</div><div className="h-4 pl-[2px]">Interval:</div><Combo value="1440" c="mt-[-1px]" /></div>
          </div>
          <div className="flex items-start">
            <span className="mt-[37px] ml-9 w-[86px]">At least :</span>
            <Combo value="0" c="mt-[30px] w-[76px]" />
            <span className="mt-[37px] ml-[10px] w-[89px]">Agents</span>
            <span className="mt-[43px] w-[126px]">Passing Impact</span>
            <Combo value="N/A" c="mt-[42px] w-[183px]" />
          </div>
        </fieldset>
        <div className="flex h-[18px] shrink-0 items-center">
          <span className="w-[89px] leading-[17px]">2: OD List:</span>
          <div className="h-[2px] flex-1 border-t border-t-[#a0a0a0] bg-white" />
        </div>
        <Table c="mt-1 h-[157px] w-[760px] shrink-0" fill blanks={6} cols={['O Zone', 'D Zone', 'Volume', 'Avg Trav...', 'Avg Dista...', 'Avg Speed']} row={['0', '0', '1.00', '60.0', '60.0', '60.0']} />
        <div className="flex">
          <div className="flex w-[466px] shrink-0 flex-col">
            <div className="mt-[11px] h-[24px] w-[296px] border border-t-[#a0a0a0] border-r-white border-b-white border-l-[#a0a0a0] leading-[19px]">1 OD pair(s) selected.</div>
            <div className="mt-[11px] h-4">3: Path List:</div>
            <Table c="mt-[9px] h-[138px] w-[466px]" blanks={4} cols={['Path No', 'Volume', 'Percentage', 'Travel Ti...', 'Distance', 'Speed']} row={['1', '1.00', '100.0', '60.0', '60.0', '60.0']}>
              <div className="flex h-[20px] shrink-0 items-center bg-[#f0f0f0]">
                <svg className="mx-[6px] h-[10px] w-[9px]" viewBox="0 0 9 10" fill="none" stroke="#505050" strokeWidth="2"><path d="M7 0.500L2 5L7 9.500" /></svg>
                <div className="h-full w-[404px] bg-[#cdcdcd]" />
                <svg className="ml-[22px] h-[10px] w-[9px]" viewBox="0 0 9 10" fill="none" stroke="#505050" strokeWidth="2"><path d="M2 0.500L7 5L2 9.500" /></svg>
              </div>
            </Table>
            <Btn c="mt-2 h-[28px] w-[51px] self-end">Export</Btn>
            <Btn c="mt-4 ml-4 h-[28px] w-[256px]">Agent Data Analysis for Listed OD Pairs</Btn>
          </div>
          <div className="flex flex-1 flex-col">
            <div className="mt-2 ml-[38px] h-4">4: Agent List:</div>
            <div className="mt-3 ml-[33px] h-4 w-[238px] tracking-[-0.08px]">Agent ID, type, departure time, travel time</div>
            <div className={`mt-[19px] ml-[77px] h-[130px] w-[200px] ${SUNKEN}`}><div className="pl-[2px] leading-[18px]">No. 1, @0.0 min, 0.0 min</div></div>
            <Btn c="mt-[66px] ml-[248px] h-[28px] w-[63px]" />
          </div>
        </div>
      </div>
    </div>
  );
}

export default function App() {
  return (
    <div className={`relative flex h-[954px] w-[1623px] flex-col overflow-hidden bg-white text-[12.5px] text-black ${TAHOMA}`}>
      <header className={`h-[52px] shrink-0 whitespace-nowrap ${SEGOE}`}>
        <div className="flex h-[31px] items-start pl-1">
          <span className="mt-[6px] w-[23px] font-['DejaVu_Sans_Mono',monospace] text-[12px] leading-[13px] font-bold text-[#f00]">NT</span>
          <span className="text-[15px] leading-[31px] tracking-[0.25px]">NeXTA-GMNS v0.9.12022020 - [wejo_12052019]</span>
        </div>
        <div className="flex h-[21px] items-center pl-[7px] text-[14.5px] leading-[21px] tracking-[-0.1px]">
          <svg className="h-[15px] w-[19px]" viewBox="0 0 19 15" shapeRendering="crispEdges"><defs><linearGradient id="doc" x1="0" x2="1" y1="0" y2="1"><stop offset="0" stopColor="#3a6ea5" /><stop offset="1" stopColor="#4aa080" /></linearGradient></defs><rect x="0.500" y="0.500" width="18" height="14" fill="#f4f4f8" stroke="#9aa0a8" /><rect x="2" y="3" width="9" height="10" fill="url(#doc)" /><rect x="15" y="3" width="2" height="5" fill="#5a9a9a" /></svg>
          <span className="ml-[8px] w-[37px]">File</span><span className="w-[46px]">View</span><span className="w-[40px]">Edit</span>
          <span className="w-[60px]">Project</span><span className="w-[49px]">Tools</span><span className="w-[69px]">Window</span><span>Help</span>
        </div>
      </header>
      <div className="h-[2px] shrink-0 bg-[#f0f0f0]" />
      <div className="h-[3px] shrink-0 border-y border-[#a0a0a0] bg-white" />
      <div className="h-[24px] shrink-0 border-b border-b-[#a0a0a0]"><MainToolbar /></div>
      <div className="h-[35px] shrink-0"><TimeSlider /></div>
      <div className="h-px shrink-0 bg-[#a0a0a0]" />
      <div className="h-[39px] shrink-0"><ViewToolbar /></div>
      <div className="h-[2px] shrink-0 border-t border-t-[#a0a0a0] bg-[#696969]" />
      <main className="flex h-[796px]">
        <SidePanel />
        <NetworkMap />
      </main>
      <Dialog />
    </div>
  );
}
